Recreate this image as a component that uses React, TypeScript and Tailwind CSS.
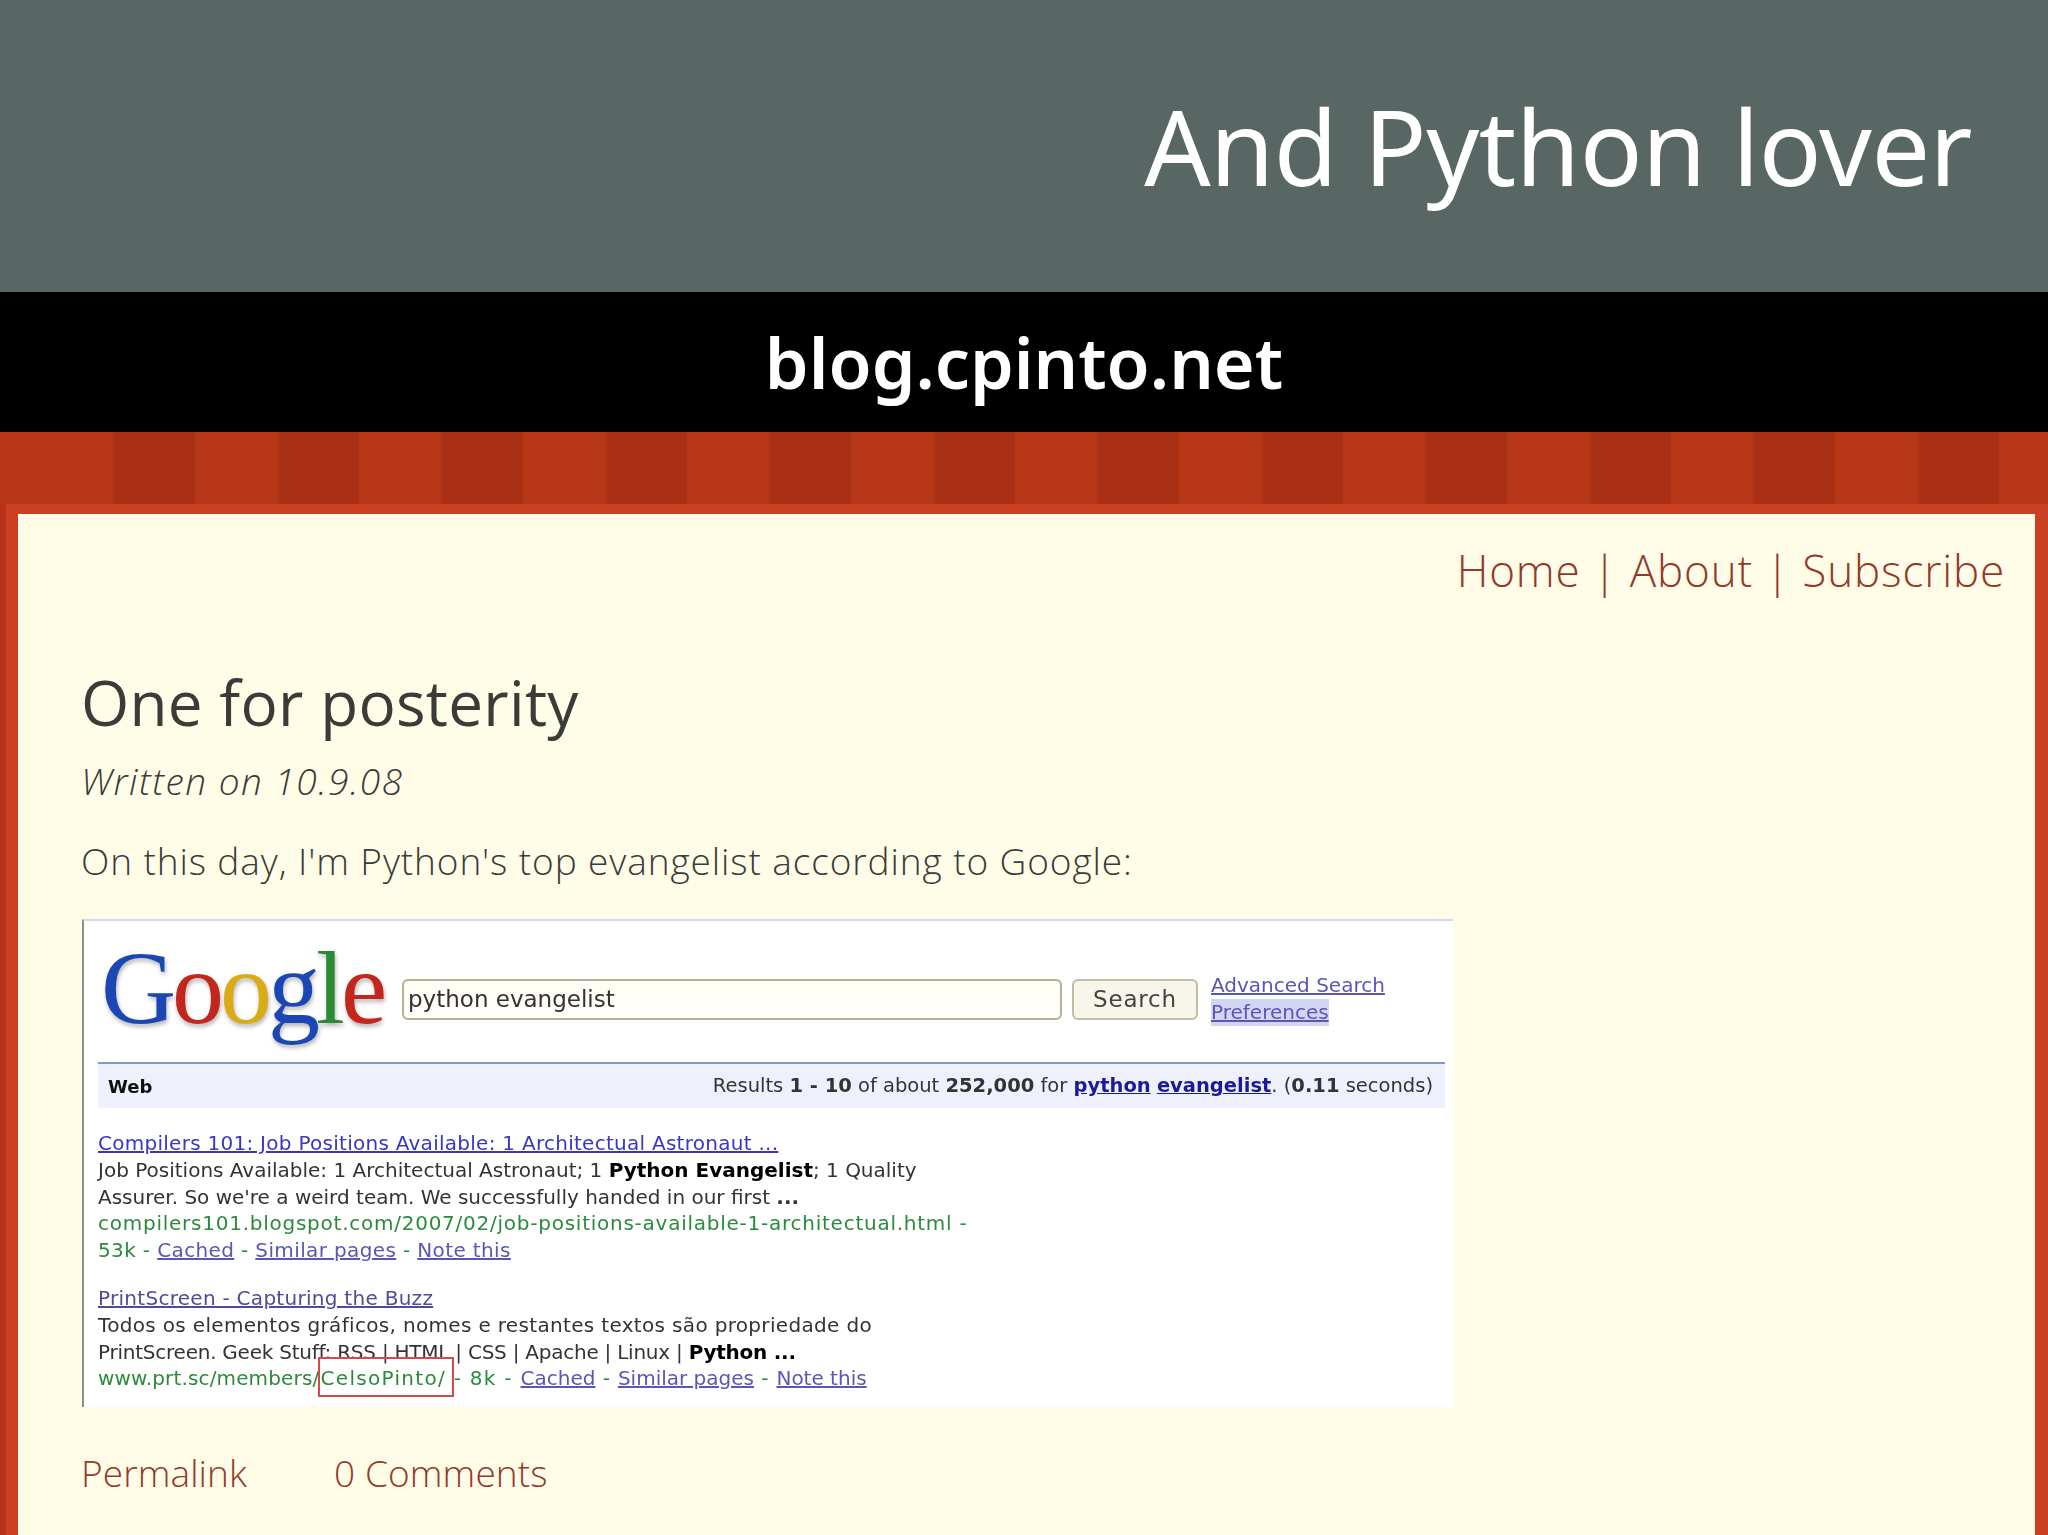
import React from 'react';

const shotFont = "font-['DejaVu_Sans',sans-serif]";
const blogFont = "font-['Open_Sans',sans-serif]";

const ShotLink: React.FC<{ children: React.ReactNode }> = ({ children }) => (
  <span className="text-[#5a55b8] underline">{children}</span>
);

const GoogleLogo: React.FC = () => (
  <div className="mb-[8px] ml-[3px] flex w-[301px] items-start font-['Liberation_Serif',serif] text-[104px] leading-[100px] tracking-[-4px] [text-shadow:1px_3px_4px_#b5b5b5]">
    <span className="text-[#1b47b5]">G</span>
    <span className="text-[#c3261c]">o</span>
    <span className="text-[#d9ac17]">o</span>
    <span className="text-[#1b47b5]">g</span>
    <span className="text-[#2b8a33]">l</span>
    <span className="text-[#c3261c]">e</span>
  </div>
);

const GoogleShot: React.FC = () => (
  <div className={`relative ml-[1px] mt-[35px] h-[488px] w-[1371px] border-l-2 border-t-2 border-l-[#8d8d8d] border-t-[#d5d7e2] bg-white pl-[14px] pr-[8px] ${shotFont} text-[#333] blur-[0.5px]`}>
    <div className="flex h-[141px] items-center">
      <GoogleLogo />
      <div className="mt-[16px] flex h-[41px] w-[660px] items-center rounded-[6px] border-2 border-[#b5b091] bg-[#fffdf6] pl-[4px] text-[23px] text-[#333]">
        python evangelist
      </div>
      <div className="ml-[10px] mt-[16px] flex h-[41px] w-[126px] items-center justify-center rounded-[6px] border-2 border-[#c2bea4] bg-[#f8f5ea] text-[23px] tracking-[0.8px] text-[#444]">
        Search
      </div>
      <div className="ml-[13px] mt-[14px] flex flex-col text-[20px] leading-[27px]">
        <ShotLink>Advanced Search</ShotLink>
        <span className="self-start bg-[#d3d6f2]"><ShotLink>Preferences</ShotLink></span>
      </div>
    </div>
    <div className="flex h-[46px] w-[1347px] items-center justify-between border-t-2 border-[#7f9ccb] bg-[#eef1fb] pl-[10px] pr-[12px] text-[19.5px]">
      <span className="text-[18px] font-bold text-[#111]">Web</span>
      <span>
        Results <b>1 - 10</b> of about <b>252,000</b> for{' '}
        <b className="text-[#1c1a9c] underline">python</b>{' '}
        <b className="text-[#1c1a9c] underline">evangelist</b>. (<b>0.11</b> seconds)
      </span>
    </div>
    <div className="mt-[22px] text-[20px] leading-[26.8px]">
      <div className="tracking-[0.27px] text-[#3a36c4] underline">Compilers 101: Job Positions Available: 1 Architectual Astronaut ...</div>
      <div>Job Positions Available: 1 Architectual Astronaut; 1 <b className="text-black">Python Evangelist</b>; 1 Quality</div>
      <div>Assurer. So we're a weird team. We successfully handed in our first <b>...</b></div>
      <div className="tracking-[0.75px] text-[#2c8a3c]">compilers101.blogspot.com/2007/02/job-positions-available-1-architectual.html -</div>
      <div className="tracking-[0.37px] text-[#2c8a3c]">
        53k - <ShotLink>Cached</ShotLink> - <ShotLink>Similar pages</ShotLink> - <ShotLink>Note this</ShotLink>
      </div>
    </div>
    <div className="mt-[21px] text-[20px] leading-[26.8px]">
      <div className="tracking-[0.28px] text-[#4f4a9c] underline">PrintScreen - Capturing the Buzz</div>
      <div className="tracking-[0.33px]">Todos os elementos gráficos, nomes e restantes textos são propriedade do</div>
      <div className="tracking-[-0.24px]">PrintScreen. Geek Stuff: RSS | HTML | CSS | Apache | Linux | <b className="text-black">Python ...</b></div>
      <div className="text-[#2c8a3c]">
        <span className="tracking-[0.15px]">www.prt.sc/members</span>
        <span className="tracking-[1.3px]">/CelsoPinto/ - 8k - </span>
        <ShotLink>Cached</ShotLink>
        <span className="tracking-[0.84px]"> - </span>
        <ShotLink>Similar pages</ShotLink>
        <span className="tracking-[0.84px]"> - </span>
        <ShotLink>Note this</ShotLink>
      </div>
    </div>
    <div className="absolute left-[234px] top-[436px] h-[40px] w-[136px] border-2 border-[#d5484c]" />
  </div>
);

const App: React.FC = () => {
  return (
    <div className="flex h-[1535px] w-[2048px] flex-col overflow-hidden bg-[#b73418]">
      <header className="flex h-[292px] items-start justify-end bg-[#586664] pr-[76px] pt-[78px]">
        <h1 className="font-['Noto_Sans',sans-serif] text-[104px] leading-[136px] tracking-[-0.5px] text-white">And Python lover</h1>
      </header>
      <div className="flex h-[140px] items-center justify-center bg-black">
        <span className="font-['Noto_Sans',sans-serif] text-[70px] font-semibold leading-none text-white">blog.cpinto.net</span>
      </div>
      <div className="h-[72px] bg-[repeating-linear-gradient(90deg,#b73618_0px,#b73618_80px,#aa3015_84px,#aa3015_162px,#b73618_164px)] bg-[position:32px_0]" />
      <div className="ml-[6px] flex-1 border-l-[12px] border-r-[13px] border-t-[10px] border-[#cc4022] bg-[#fffce8]">
        <nav className={`flex justify-end pr-[30px] pt-[29px] ${blogFont} text-[44px] font-light leading-[54px] tracking-[0.85px] text-[#93392a]`}>
          Home | About | Subscribe
        </nav>
        <main className={`pl-[63px] ${blogFont}`}>
          <h2 className="mt-[67px] text-[62px] leading-[76px] tracking-[0.3px] text-[#3b3b38]">One for posterity</h2>
          <p className="mt-[18px] text-[37px] font-light italic leading-[46px] tracking-[1.5px] text-[#3b3b38]">Written on 10.9.08</p>
          <p className="mt-[34px] text-[37px] font-light leading-[46px] tracking-[0.9px] text-[#3b3b38]">On this day, I'm Python's top evangelist according to Google:</p>
          <GoogleShot />
          <div className="mt-[43px] flex gap-[87px] text-[37px] font-light leading-[46px] tracking-[0.1px] text-[#93392a]">
            <span>Permalink</span>
            <span>0 Comments</span>
          </div>
        </main>
      </div>
    </div>
  );
};

export default App;
